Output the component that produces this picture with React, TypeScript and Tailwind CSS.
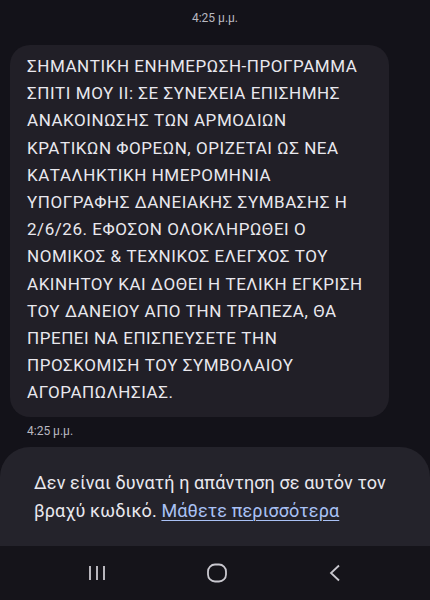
const lines = [
  "ΣΗΜΑΝΤΙΚΗ ΕΝΗΜΕΡΩΣΗ-ΠΡΟΓΡΑΜΜΑ",
  "ΣΠΙΤΙ ΜΟΥ ΙΙ: ΣΕ ΣΥΝΕΧΕΙΑ ΕΠΙΣΗΜΗΣ",
  "ΑΝΑΚΟΙΝΩΣΗΣ ΤΩΝ ΑΡΜΟΔΙΩΝ",
  "ΚΡΑΤΙΚΩΝ ΦΟΡΕΩΝ, ΟΡΙΖΕΤΑΙ ΩΣ ΝΕΑ",
  "ΚΑΤΑΛΗΚΤΙΚΗ ΗΜΕΡΟΜΗΝΙΑ",
  "ΥΠΟΓΡΑΦΗΣ ΔΑΝΕΙΑΚΗΣ ΣΥΜΒΑΣΗΣ Η",
  "2/6/26. ΕΦΟΣΟΝ ΟΛΟΚΛΗΡΩΘΕΙ Ο",
  "ΝΟΜΙΚΟΣ & ΤΕΧΝΙΚΟΣ ΕΛΕΓΧΟΣ ΤΟΥ",
  "ΑΚΙΝΗΤΟΥ ΚΑΙ ΔΟΘΕΙ Η ΤΕΛΙΚΗ ΕΓΚΡΙΣΗ",
  "ΤΟΥ ΔΑΝΕΙΟΥ ΑΠΟ ΤΗΝ ΤΡΑΠΕΖΑ, ΘΑ",
  "ΠΡΕΠΕΙ ΝΑ ΕΠΙΣΠΕΥΣΕΤΕ ΤΗΝ",
  "ΠΡΟΣΚΟΜΙΣΗ ΤΟΥ ΣΥΜΒΟΛΑΙΟΥ",
  "ΑΓΟΡΑΠΩΛΗΣΙΑΣ.",
];

export default function App() {
  return (
    <div
      className="flex h-[600px] w-[430px] flex-col overflow-hidden bg-[#131219] text-[#e9e8ee]"
      style={{ fontFamily: "Roboto, 'Noto Sans', sans-serif" }}
    >
      <div className="flex-1">
        <p className="pt-[9px] text-center text-[12px] leading-[18px] text-[#b9b8c0]">4:25 μ.μ.</p>

        <div className="ml-[10px] mt-[18px] w-[379px] rounded-[20px] bg-[#211f27] pb-[10px] pl-[17px] pr-[6px] pt-[8px]">
          {lines.map((line) => (
            <p key={line} className="whitespace-nowrap text-[17px] leading-[27.2px] tracking-[0.55px]">
              {line}
            </p>
          ))}
        </div>

        <p className="ml-[27px] mt-[5px] text-[12px] leading-[18px] text-[#b9b8c0]">4:25 μ.μ.</p>
      </div>

      <div className="rounded-t-[30px] bg-[#24232b] px-[34px] pb-[21px] pt-[22px]">
        <p className="whitespace-nowrap text-[18px] leading-[28px] tracking-[0.12px]">
          Δεν είναι δυνατή η απάντηση σε αυτόν τον
        </p>
        <p className="whitespace-nowrap text-[18px] leading-[28px] tracking-[0.12px]">
          βραχύ κωδικό.{" "}
          <span className="text-[#a9c1f5] underline decoration-1 underline-offset-[3px]">Μάθετε περισσότερα</span>
        </p>
      </div>

      <div className="flex h-[54px] items-center justify-around bg-[#15141a] px-[37px]">
        <svg width="20" height="18" viewBox="0 0 20 18" fill="none" stroke="#c9c8cf" strokeWidth="1.8">
          <path d="M3 2v14M10 2v14M17 2v14" />
        </svg>
        <svg width="22" height="20" viewBox="0 0 22 20" fill="none" stroke="#c9c8cf" strokeWidth="1.8">
          <rect x="2" y="1.5" width="18" height="17" rx="7" />
        </svg>
        <svg width="16" height="18" viewBox="0 0 16 18" fill="none" stroke="#c9c8cf" strokeWidth="1.8">
          <path d="M12 1.5L4 9l8 7.5" />
        </svg>
      </div>
    </div>
  );
}
